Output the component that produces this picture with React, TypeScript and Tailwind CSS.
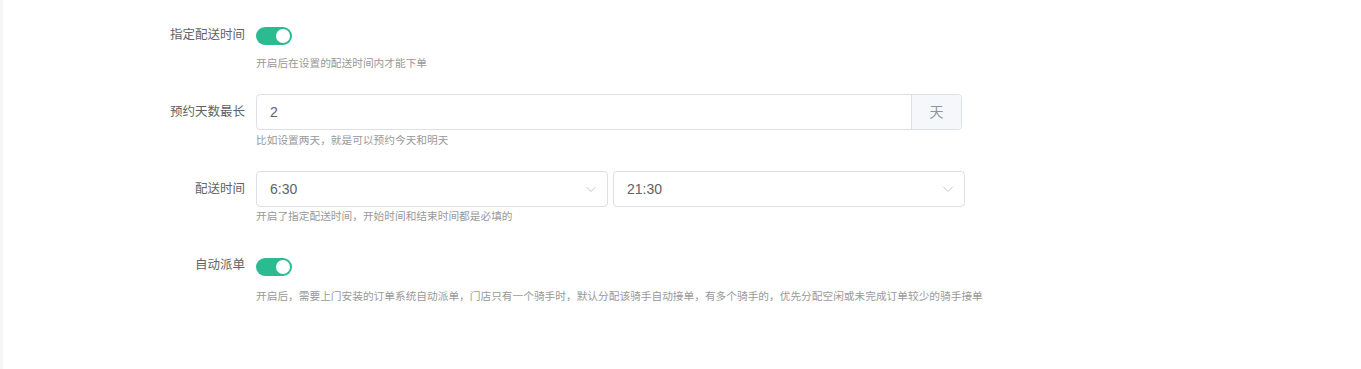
const font = { fontFamily: '"Liberation Sans", "Noto Sans CJK SC", sans-serif' };

const Toggle = () => (
  <div className="relative h-[18px] w-[36px] rounded-full bg-[#2cba91]">
    <span className="absolute right-[2px] top-[2px] h-[14px] w-[14px] rounded-full bg-white" />
  </div>
);

const Chevron = () => (
  <svg width="12" height="12" viewBox="0 0 12 12" fill="none" className="text-[#c0c4cc]">
    <path d="M1.5 4 L6 8.5 L10.5 4" stroke="currentColor" strokeWidth="1" />
  </svg>
);

const Label = ({ children }: { children: React.ReactNode }) => (
  <div className="w-[253px] shrink-0 pr-[11px] text-right text-[12.5px] text-[#606266]">{children}</div>
);

const Help = ({ children, className }: { children: React.ReactNode; className: string }) => (
  <div className={`text-[10.7px] leading-[16px] text-[#999999] ${className}`}>{children}</div>
);

const Select = ({ value }: { value: string }) => (
  <div className="flex h-[36px] w-[352px] items-center justify-between rounded-[4px] border border-[#dcdfe6] bg-white pl-[13px] pr-[10px] text-[14px] text-[#606266]">
    <span>{value}</span>
    <Chevron />
  </div>
);

export default function App() {
  return (
    <div className="flex h-[369px] w-full bg-white" style={font}>
      <div className="w-[3px] bg-[#f6f6f6]" />
      <div className="flex-1 pt-[27px]">
        {/* 指定配送时间 */}
        <div className="flex">
          <Label>
            <div className="leading-[16px]">指定配送时间</div>
          </Label>
          <div className="flex flex-col">
            <Toggle />
            <Help className="mt-[10px]">开启后在设置的配送时间内才能下单</Help>
          </div>
        </div>

        {/* 预约天数最长 */}
        <div className="mt-[23px] flex">
          <Label>
            <div className="leading-[36px]">预约天数最长</div>
          </Label>
          <div className="flex flex-col">
            <div className="flex h-[36px] w-[706px] rounded-[4px] border border-[#dcdfe6]">
              <div className="flex flex-1 items-center pl-[13px] text-[14px] text-[#606266]">2</div>
              <div className="flex w-[50px] items-center justify-center rounded-r-[4px] border-l border-[#dcdfe6] bg-[#f5f7fa] text-[14px] text-[#909399]">
                天
              </div>
            </div>
            <Help className="mt-[2px]">比如设置两天，就是可以预约今天和明天</Help>
          </div>
        </div>

        {/* 配送时间 */}
        <div className="mt-[23px] flex">
          <Label>
            <div className="leading-[36px]">配送时间</div>
          </Label>
          <div className="flex flex-col">
            <div className="flex gap-[5px]">
              <Select value="6:30" />
              <Select value="21:30" />
            </div>
            <Help className="mt-[1px]">开启了指定配送时间，开始时间和结束时间都是必填的</Help>
          </div>
        </div>

        {/* 自动派单 */}
        <div className="mt-[34px] flex">
          <Label>
            <div className="leading-[16px] -mt-[1px]">自动派单</div>
          </Label>
          <div className="flex flex-col">
            <Toggle />
            <Help className="mt-[12px]">
              开启后，需要上门安装的订单系统自动派单，门店只有一个骑手时，默认分配该骑手自动接单，有多个骑手的，优先分配空闲或未完成订单较少的骑手接单
            </Help>
          </div>
        </div>
      </div>
    </div>
  );
}
